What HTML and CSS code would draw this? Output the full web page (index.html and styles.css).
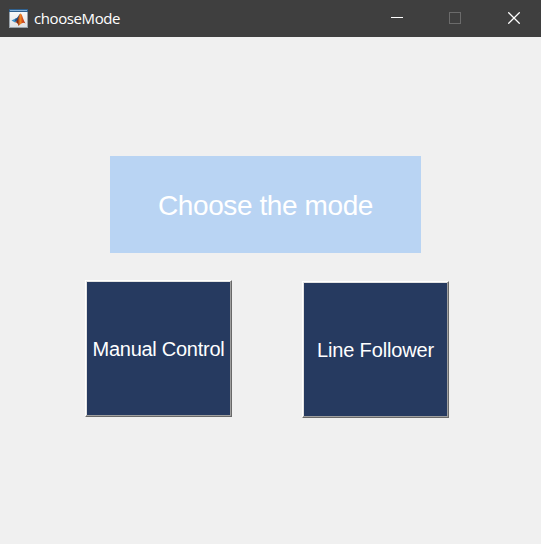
FILE: index.html
```
<!DOCTYPE html>
<html lang="en">
<head>
<meta charset="utf-8">
<title>chooseMode</title>
<link rel="stylesheet" href="styles.css">
</head>
<body>
<header class="titlebar">
  <svg class="app-icon" width="20" height="20" viewBox="0 0 20 20">
    <defs>
      <linearGradient id="paper" x1="0" y1="0" x2="0" y2="1"><stop offset="0" stop-color="#fdfdfd"/><stop offset="1" stop-color="#dfe1e3"/></linearGradient>
      <linearGradient id="flame" x1="0" y1="0" x2="1" y2="0"><stop offset="0" stop-color="#d9601c"/><stop offset=".25" stop-color="#7a2412"/><stop offset=".5" stop-color="#f08a24"/><stop offset=".75" stop-color="#d4491a"/><stop offset="1" stop-color="#a02c10"/></linearGradient>
    </defs>
    <rect x="0.5" y="0.5" width="18" height="18" fill="url(#paper)" stroke="#9aa3ab"/>
    <rect x="0" y="0" width="19" height="3" fill="#2f5f8c"/>
    <rect x="1" y="1" width="17" height="1" fill="#86b2da"/>
    <path d="M2.500 11.500L6.500 9.500L9 11.500L6 13.500Z" fill="#3f8fc4"/>
    <path d="M6.500 9.500C9 9 9.500 6 11.500 4.500L11 9L8 13L6 12Z" fill="#1f4f86"/>
    <path d="M6 13.500C9 12 9.500 6 11.500 4.500C13.500 5 14 11 16.500 14.500C14.500 13 13 14 9.500 17C9 14.500 8 13 6 13.500Z" fill="url(#flame)"/>
  </svg>
  <span class="window-title">chooseMode</span>
  <nav class="controls">
    <svg width="12" height="12" viewBox="0 0 12 12"><path d="M0 5.500H12" stroke="#fff"/></svg>
    <svg width="12" height="12" viewBox="0 0 12 12"><rect x=".5" y=".5" width="11" height="11" fill="none" stroke="#6b6b6b"/></svg>
    <svg class="close" width="12" height="12" viewBox="0 0 12 12"><path d="M.3 .3L11.700 11.700M11.700 .3L.3 11.700" stroke="#fff" stroke-width="1.250"/></svg>
  </nav>
</header>
<main class="content">
  <h1 class="banner">Choose the mode</h1>
  <div class="modes">
    <button class="mode mode-manual">Manual Control</button>
    <button class="mode mode-line">Line Follower</button>
  </div>
</main>
</body>
</html>
```
FILE: styles.css
```
* { box-sizing: border-box; }
body {
  margin: 0;
  height: 544px;
  overflow: hidden;
  background: #f0f0f0;
  font-family: "Liberation Sans", Arial, sans-serif;
}
.titlebar {
  display: flex;
  align-items: center;
  height: 37px;
  padding: 0 21px 1px 9px;
  background: #3f3f3f;
  color: #fff;
}
.app-icon { flex: none; margin: 2px 5px 0 0; }
.window-title {
  font: 15px/20px "Open Sans", "Noto Sans", sans-serif;
  letter-spacing: -0.4px;
}
.controls {
  display: flex;
  gap: 46px;
  margin-left: auto;
}
.controls svg { display: block; }
.close { margin-left: 1px; }
.content { padding-top: 119px; }
.banner {
  display: flex;
  align-items: center;
  justify-content: center;
  width: 311px;
  height: 97px;
  margin: 0 0 0 110px;
  padding-top: 3px;
  background: #b9d4f3;
  color: #fff;
  font-size: 28px;
  font-weight: 400;
  letter-spacing: -0.4px;
}
.modes {
  display: flex;
  gap: 70px;
  padding: 27px 0 0 85px;
}
.mode {
  width: 147px;
  height: 137px;
  padding: 0;
  border: 1px solid;
  border-color: #fff #696969 #696969 #fff;
  box-shadow: inset -1px -1px #a0a0a0, inset 1px 1px #e3e3e3;
  background: #263a60;
  color: #fff;
  font: 20px/24px "Liberation Sans", Arial, sans-serif;
  letter-spacing: -0.15px;
  white-space: nowrap;
}
.mode-manual { letter-spacing: -0.27px; }
.mode-line { margin-top: 1px; }
```
